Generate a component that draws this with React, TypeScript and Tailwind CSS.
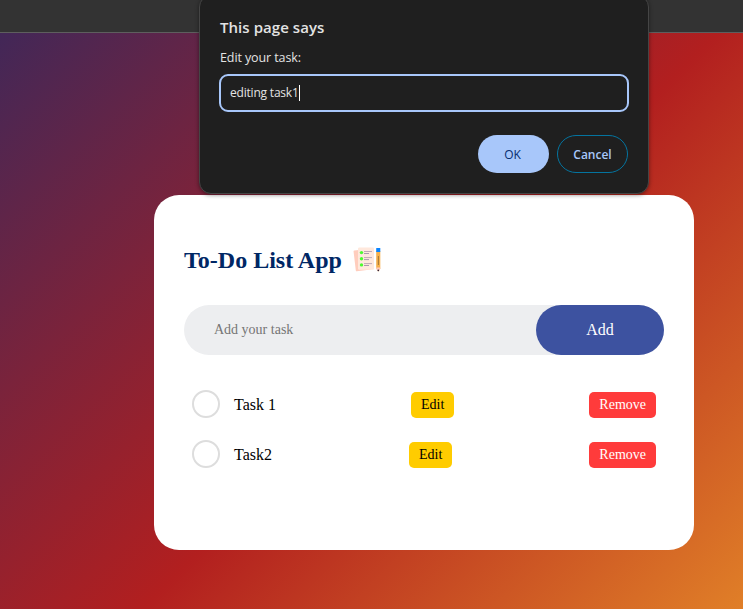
const tasks = ["Task 1", "Task2"];

function ChecklistIcon() {
  return (
    <svg width="30" height="30" viewBox="0 0 30 30" className="ml-2.5 shrink-0">
      <path d="M2.3 5.5 16 4l2.8 20.5-14 1.8a1 1 0 0 1-1-.9L1.6 6.7a1 1 0 0 1 .7-1.2Z" fill="#ffcdbd" />
      <rect x="6" y="2.5" width="16" height="22.3" rx="1.2" fill="#ffe8dc" />
      <g fill="#4dfb32">
        <circle cx="9.5" cy="7.6" r="1.7" />
        <circle cx="9.5" cy="13.7" r="1.7" />
        <circle cx="9.5" cy="19.9" r="1.7" />
      </g>
      <path d="M12 6.5h8M12 12.6h8M12 18.6h8" stroke="#bfa9b6" strokeWidth="1" />
      <path d="M12 8.5h5M12 14.6h5M12 20.5h5" stroke="#a38fa9" strokeWidth="0.9" />
      <path d="M24.2 6h4.1v17.2l-1.5 3h-1l-1.6-3Z" fill="#f6b04c" />
      <path d="M24.2 22.5h4.1v1l-1.3 2.3h-1.4l-1.4-2.3Z" fill="#ffc9bb" />
      <circle cx="26.3" cy="25.4" r="0.8" fill="#2b2340" />
      <rect x="24.2" y="3" width="4.1" height="4" rx="0.5" fill="#0a84ff" />
      <path d="M26.4 11v9" stroke="#9a6f35" strokeWidth="0.9" />
    </svg>
  );
}

function PromptDialog() {
  return (
    <div className="absolute -top-[5px] left-[199px] flex h-[199px] w-[450px] flex-col rounded-xl border border-[#454545] bg-[#1f1f1f] px-[19px] pt-5 font-['Open_Sans','Noto_Sans',sans-serif] text-[#e3e3e3] shadow-[0_1px_4px_rgba(0,0,0,0.45)]">
      <h1 className="pl-px text-[15px] leading-[22px] font-semibold tracking-[0.05px]">This page says</h1>
      <p className="mt-2.5 pl-px text-[12.5px] leading-5 tracking-[-0.1px]">Edit your task:</p>
      <div className="mt-1.5 flex h-[38px] shrink-0 items-center rounded-[9px] border-2 border-[#a8c7fa] px-[9px] text-xs">
        <span className="tracking-[-0.2px]">editing task1</span>
        <span className="h-4 w-px bg-white" />
      </div>
      <div className="mt-[23px] flex justify-end gap-2 pr-px text-xs font-semibold">
        <button className="h-[38px] w-[71px] rounded-full bg-[#a8c7fa] pt-px pr-0.5 font-medium text-[#062e6f]">OK</button>
        <button className="h-[38px] w-[71px] rounded-full border border-[#04749f] pt-px text-[#a8c7fa]">Cancel</button>
      </div>
    </div>
  );
}

export default function App() {
  return (
    <div className="relative flex h-[609px] w-[743px] flex-col overflow-hidden font-['Liberation_Serif',serif]">
      <div className="h-[33px] shrink-0 border-b border-[#5e5e5e] bg-[#333333]" />
      <main className="flex-1 bg-[linear-gradient(135deg,#1a2a6c,#b21f1f,#fdbb2d)] bg-[length:1366px_588px] bg-[position:-259px_0px] pt-[162px] pl-[154px]">
        <section className="h-[355px] w-[540px] rounded-[25px] bg-white px-[30px] pt-[50px]">
          <h2 className="flex h-[30px] items-center text-2xl font-bold text-[#002765]">
            To-Do List App
            <ChecklistIcon />
          </h2>
          <div className="mt-[30px] flex h-[50px] items-center rounded-full bg-[#edeef0] pl-5">
            <input
              className="min-w-0 flex-1 bg-transparent p-2.5 text-sm outline-none placeholder:text-[#757575]"
              placeholder="Add your task"
            />
            <button className="h-[50px] w-32 rounded-full bg-[#3d52a0] text-base text-white">Add</button>
          </div>
          <ul className="mt-[25px]">
            {tasks.map((task) => (
              <li key={task} className="flex h-[50px] items-center px-2 text-base text-black">
                <span className="mr-3.5 -mt-0.5 size-7 shrink-0 rounded-full border-2 border-[#dddddd]" />
                <div className="flex flex-1 items-center justify-between">
                  <span>{task}</span>
                  <button className="h-[26px] rounded-[5px] bg-[#ffcc00] px-2.5 text-sm">Edit</button>
                  <button className="h-[26px] rounded-[5px] bg-[#ff3b3b] px-2.5 text-sm text-white">Remove</button>
                </div>
              </li>
            ))}
          </ul>
        </section>
      </main>
      <PromptDialog />
    </div>
  );
}
